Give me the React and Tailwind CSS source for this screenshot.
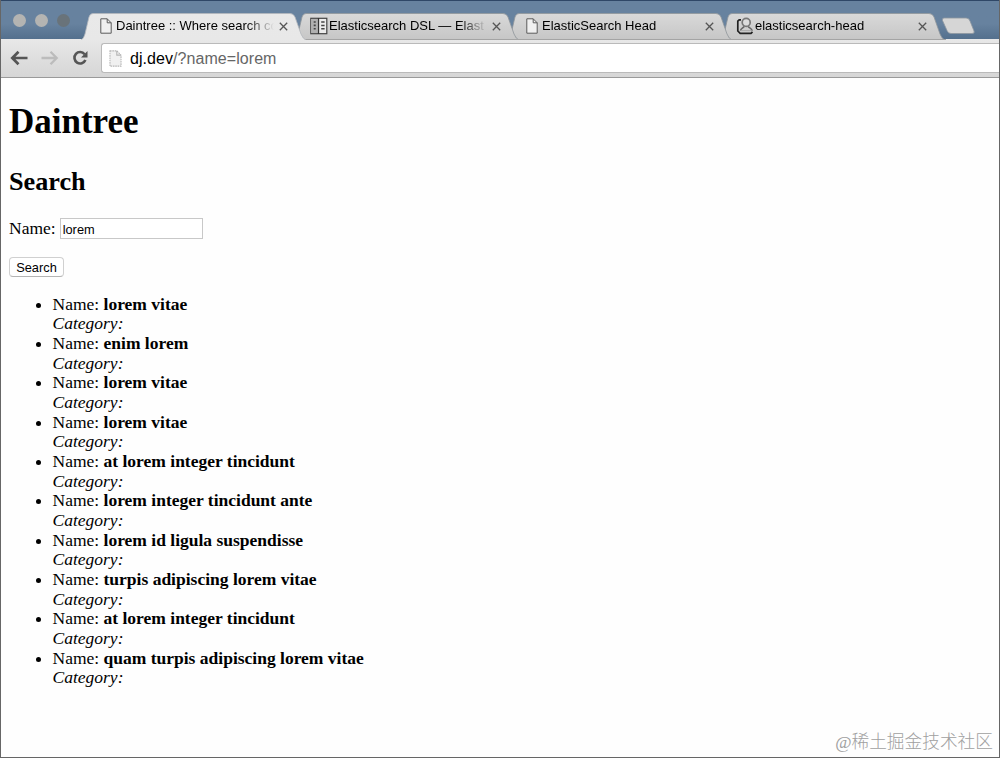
import React, { useState } from 'react';

const TABS = [
  { id: 'daintree', title: 'Daintree :: Where search co', icon: 'page', layer: 'z-40' },
  { id: 'dsl', title: 'Elasticsearch DSL — Elast', icon: 'docs', layer: 'z-30' },
  { id: 'head', title: 'ElasticSearch Head', icon: 'page', layer: 'z-20' },
  { id: 'repo', title: 'elasticsearch-head', icon: 'person', layer: 'z-10' },
];

const RESULTS = [
  'lorem vitae',
  'enim lorem',
  'lorem vitae',
  'lorem vitae',
  'at lorem integer tincidunt',
  'lorem integer tincidunt ante',
  'lorem id ligula suspendisse',
  'turpis adipiscing lorem vitae',
  'at lorem integer tincidunt',
  'quam turpis adipiscing lorem vitae',
];

const PageIcon = ({ className, dashed }) => (
  <svg viewBox="0 0 12 16" className={className} fill="#f0f0f0" stroke="currentColor">
    <path d="M.8.8h6.4l4 4v10.4H.8z" strokeDasharray={dashed ? '1.5 .7' : undefined} />
    <path d="M7.2.8v4h4" fill="none" />
  </svg>
);

const DocsIcon = () => (
  <svg viewBox="0 0 18 18" className="h-[18px] w-[18px]">
    <rect x=".8" y="1.3" width="16" height="15.4" fill="#ececec" stroke="#444" strokeWidth="1.2" />
    <path d="M1.4 2h6.4v14H1.4z" fill="#b0b0b0" />
    <path d="M8.5 1v16" stroke="#333" strokeWidth="1.3" />
    <path d="M3.700 5h2M3.700 8.400h2M3.700 11.800h2" stroke="#444" strokeWidth="1.600" />
    <path d="M11.200 5h3.400M11.200 8.400h3.400M11.200 11.800h3.400" stroke="#444" strokeWidth="1.500" />
  </svg>
);

const PersonIcon = () => (
  <svg viewBox="0 0 18 18" className="h-[18px] w-[18px]" fill="none">
    <path d="M5 2.800H3.200L1.800 4.200v9.800l2.400 2.400h10.800l1.500-1.500" stroke="#222" strokeWidth="1.700" />
    <path d="M8.300 9.200c-.7 1.800-3.600 1.800-3.800 4.600M12 9.200c.7 1.800 3.900 1.900 4.100 4.600" stroke="#666" strokeWidth="1.700" />
    <circle cx="10.200" cy="5.400" r="4" fill="#dcdcdc" stroke="#777" strokeWidth="1.700" />
    <path d="M4.500 13.600h11" stroke="#aaa" />
  </svg>
);

const Tab = ({ tab, active }) => (
  <div className={`relative -mr-[13px] h-[27px] w-[226px] shrink-0 ${tab.layer}`}>
    <svg viewBox="0 0 226 27" className="absolute inset-0 h-full w-full">
      <defs>
        <linearGradient id={`fill-${tab.id}`} x1="0" y1="0" x2="0" y2="1">
          <stop offset="0" stopColor={active ? '#e9e9e9' : '#d9d9d9'} />
          <stop offset="1" stopColor={active ? '#e8e8e8' : '#c6c6c6'} />
        </linearGradient>
      </defs>
      <path
        d="M0 27C2 26 3 24 4 21L8 4Q9 .5 12 .5H209Q212.500 .5 214 4L220 21Q222 26 225 27"
        fill={`url(#fill-${tab.id})`}
        stroke={active ? '#b4b8bc' : '#8f959a'}
        strokeWidth=".8"
      />
      {!active && <path d="M0 26.500H226" stroke="#a4a4a4" />}
    </svg>
    <div className="relative flex h-[26px] items-center pl-4">
      <span className="flex w-[18px] shrink-0 justify-center">
        {tab.icon === 'page' && <PageIcon className="h-4 w-3 text-[#5b5b5b]" />}
        {tab.icon === 'docs' && <DocsIcon />}
        {tab.icon === 'person' && <PersonIcon />}
      </span>
      <span className="ml-px w-[160px] text-[13px] leading-[18px] whitespace-nowrap text-black [mask-image:linear-gradient(to_right,black_130px,transparent_158px)]">
        {tab.title}
      </span>
      <svg viewBox="0 0 9 9" className="ml-[3px] h-[9px] w-[9px] shrink-0" stroke="#555" strokeWidth="1.300">
        <path d="M.8.8l7.400 7.400M8.200.8.8 8.200" />
      </svg>
    </div>
  </div>
);

const TabStrip = () => (
  <div className="flex h-[39px] border-t border-[#2f4767] bg-linear-to-b from-[#67829f] from-60% to-[#54708d] font-[Liberation_Sans,sans-serif]">
    <div className="flex w-[80px] shrink-0 gap-[9px] pt-[13px] pl-3">
      <span className="h-[13px] w-[13px] rounded-full bg-[#b4b4b2]" />
      <span className="h-[13px] w-[13px] rounded-full bg-[#b4b4b2]" />
      <span className="h-[13px] w-[13px] rounded-full bg-[#69737a]" />
    </div>
    <div className="isolate flex pt-3">
      {TABS.map((tab, i) => (
        <Tab key={tab.id} tab={tab} active={i === 0} />
      ))}
    </div>
    <svg viewBox="0 0 34 18" className="mt-4 ml-[8px] h-[18px] w-[34px] shrink-0">
      <path
        d="M3 1h22q3 0 4 3l4 10q1 2.500-2 2.500H10q-3 0-4-3L1.500 3.500Q1 1 3 1z"
        fill="#d6d6d6"
        stroke="#8e979f"
        strokeWidth=".8"
      />
    </svg>
  </div>
);

const Toolbar = () => (
  <div className="flex h-[39px] items-start border-b border-[#9a9a9a] bg-linear-to-b from-[#e8e8e8] to-[#d6d6d6] pt-1 font-[Liberation_Sans,sans-serif]">
    <div className="flex h-[30px] w-[100px] shrink-0 items-center pl-[9px]">
      <svg viewBox="0 0 18 16" className="h-4 w-[18px] text-[#555]" fill="none" stroke="currentColor" strokeWidth="2.700">
        <path d="M8.500 1.700 2.300 8l6.200 6.300M2.500 8H17.500" />
      </svg>
      <svg viewBox="0 0 18 16" className="ml-[13px] h-4 w-[18px] text-[#bcbcbc]" fill="none" stroke="currentColor" strokeWidth="2.300">
        <path d="M9.500 1.700 15.700 8l-6.200 6.300M15.500 8H.5" />
      </svg>
      <svg viewBox="0 0 16 16" className="ml-[13px] h-4 w-4 text-[#555]">
        <path d="M12.600 4.200A5.700 5.700 0 1 0 13.400 10" fill="none" stroke="currentColor" strokeWidth="2.600" />
        <path d="M15.500 1v6.500H9z" fill="currentColor" />
      </svg>
    </div>
    <div className="flex h-[30px] flex-1 items-center rounded-l-[3px] border border-r-0 border-[#bababa] bg-white pl-[7px]">
      <PageIcon dashed className="h-[17px] w-[13px] text-[#b5b5b5]" />
      <span className="ml-[8px] pt-px text-[16px] leading-5 tracking-[.06px] text-black">
        dj.dev<span className="text-[#666]">/?name=lorem</span>
      </span>
    </div>
  </div>
);

const App = () => {
  const [name, setName] = useState('lorem');

  return (
    <div className="relative flex h-[758px] w-[1000px] flex-col overflow-hidden border-x border-b border-[#666] bg-[#fefefe] text-black">
      <TabStrip />
      <Toolbar />

      <main className="flex flex-col items-start pl-2 font-[Liberation_Serif,serif] text-[17.500px] leading-[19.670px]">
        <h1 className="mt-6 text-[35px] leading-10 font-bold">Daintree</h1>
        <h2 className="mt-[25px] text-[26.200px] leading-[30px] font-bold">Search</h2>

        <label className="mt-[21px] flex h-[22px] items-center">
          Name:
          <input
            value={name}
            onChange={(e) => setName(e.target.value)}
            className="-mt-px ml-1 h-[21px] w-[143px] border border-[#c8c8c8] bg-white pt-px pl-[2px] font-[Liberation_Sans,sans-serif] text-[12.800px] outline-none"
          />
        </label>
        <button className="mt-[17px] h-5 w-[55px] rounded-[4px] border border-[#d0d0d0] border-b-[#b4b4b4] bg-white pt-px font-[Liberation_Sans,sans-serif] text-[12.800px] leading-[17px]">
          Search
        </button>

        <ul className="mt-[17.700px] list-disc pl-[43.500px]">
          {RESULTS.map((result, i) => (
            <li key={i}>
              Name: <b>{result}</b>
              <br />
              <i>Category:</i>
            </li>
          ))}
        </ul>
      </main>

      <div className="absolute right-[6px] bottom-[3px] font-[Liberation_Serif,Noto_Sans_CJK_SC,sans-serif] text-[17.700px] leading-6 font-light whitespace-nowrap text-[#a0a0a0]">
        @稀土掘金技术社区
      </div>
    </div>
  );
};

export default App;
